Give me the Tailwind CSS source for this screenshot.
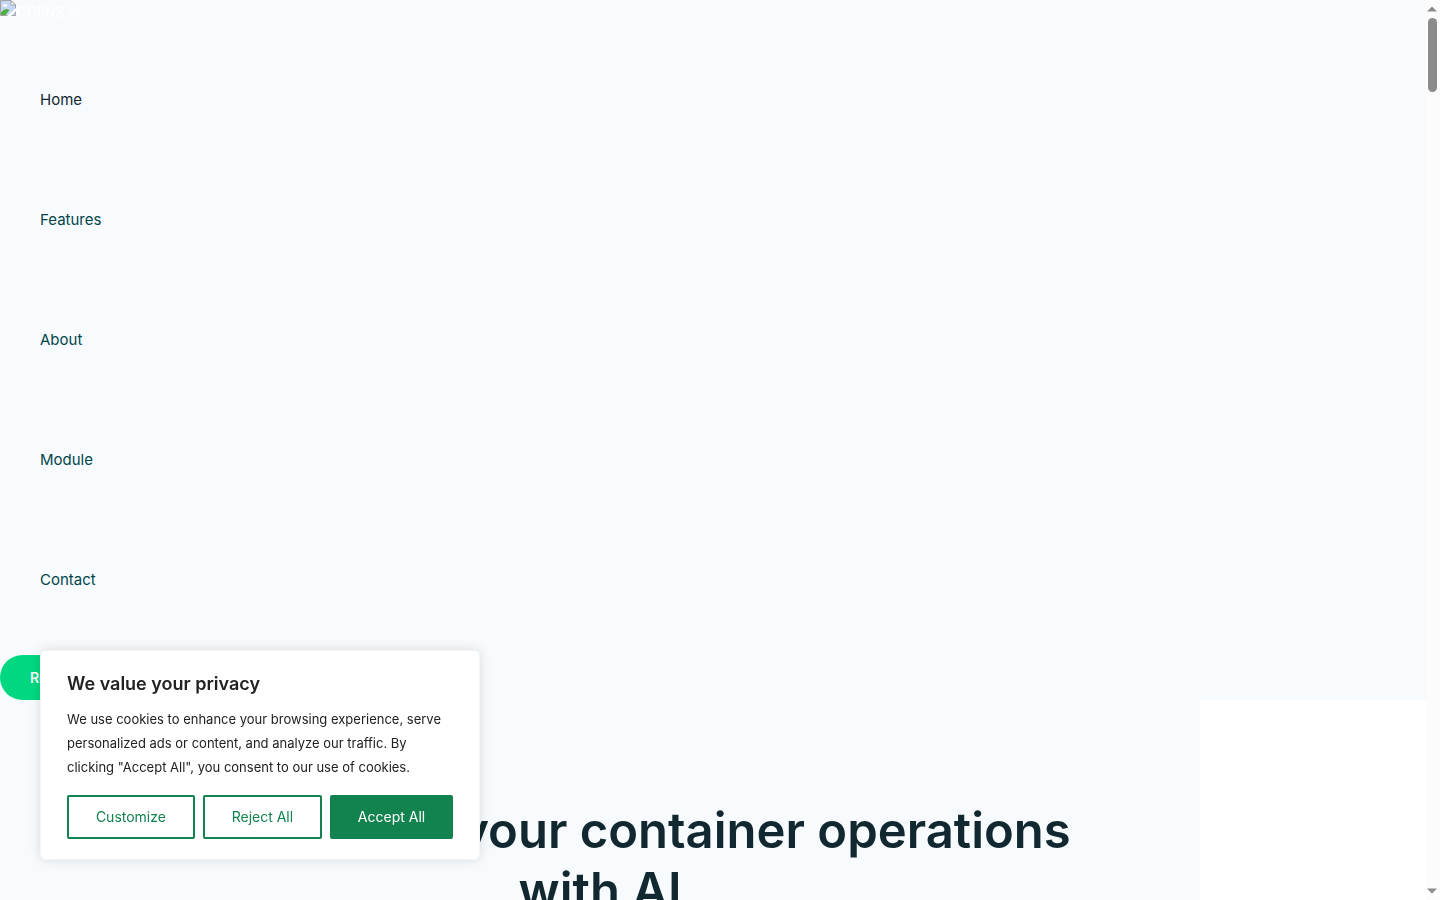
<!DOCTYPE html>
<html lang="en">
<head>
<meta charset="utf-8">
<meta name="viewport" content="width=device-width, initial-scale=1">
<title>COIINS.ai</title>
<script src="https://cdn.jsdelivr.net/npm/@tailwindcss/browser@4"></script>
</head>
<body class="flex h-screen overflow-hidden bg-white font-['Inter',sans-serif] text-[15px] text-[#004549]">
  <div class="h-screen min-w-0 flex-1 overflow-hidden">
    <header class="bg-[#f7fbfe]">
      <a href="#" class="flex h-10 items-start text-sm font-medium leading-6 text-white">
        <svg class="size-4 shrink-0" viewBox="0 0 16 16" aria-hidden="true">
          <path d="M0.5 0.5H11L15.5 5V15.5H0.5Z" fill="#c5d5f5" stroke="#a3a3a3"/>
          <path d="M11 0.5V5H15.5Z" fill="#fff" stroke="#a3a3a3"/>
          <ellipse cx="5" cy="5.5" rx="2.5" ry="1.2" fill="#fff"/>
          <path d="M1 15V12.5Q5 7 9.500 10L5.500 15Z" fill="#4fae3c"/>
          <path d="M7 16L16 8V11L11 16Z" fill="#fff"/>
        </svg>
        <span>COIINS.ai</span>
      </a>
      <nav aria-label="Main">
        <ul class="px-10 leading-[120px]">
          <li><a href="#" class="text-[#112830]">Home</a></li>
          <li><a href="#">Features</a></li>
          <li><a href="#">About</a></li>
          <li><a href="#">Module</a></li>
          <li><a href="#">Contact</a></li>
        </ul>
      </nav>
      <div class="flex pt-[15px]">
        <a href="#" class="rounded-full bg-[#00d881] px-[30px] text-sm font-semibold leading-[45px] text-white">Request Demo</a>
      </div>
    </header>
    <main class="max-w-[1200px] bg-[#f7fbfe] pt-[101px]">
      <h1 class="text-center text-[49px] font-semibold leading-[60px] text-[#112830]">Revolutionize your container operations<br>with AI</h1>
    </main>
  </div>

  <div class="flex w-[14px] shrink-0 flex-col items-center justify-between bg-[#fcfcfc] py-[6px] pr-[2px]" aria-hidden="true">
    <div class="flex flex-col items-center gap-[6px]">
      <svg class="h-[6px] w-[10px]" viewBox="0 0 10 6"><path d="M0 5.500L5 0.500L10 5.500Z" fill="#8b8b8b"/></svg>
      <div class="h-[74px] w-[9px] rounded-full bg-[#8b8b8b]"></div>
    </div>
    <svg class="h-[6px] w-[10px]" viewBox="0 0 10 6"><path d="M0 0.500L5 5.500L10 0.500Z" fill="#8b8b8b"/></svg>
  </div>

  <section role="dialog" aria-labelledby="privacy-title" class="fixed bottom-10 left-10 w-[440px] rounded-md border border-[#f4f4f4] bg-white px-[26px] pt-5 pb-5 text-[#212121] shadow-[0_0_12px_rgba(0,0,0,0.13)]">
    <h2 id="privacy-title" class="text-lg font-semibold leading-[26px]">We value your privacy</h2>
    <p class="mt-[10px] text-[13px] leading-6">We use cookies to enhance your browsing experience, serve personalized ads or content, and analyze our traffic. By clicking "Accept All", you consent to our use of cookies.</p>
    <div class="mt-4 flex gap-2 text-sm text-[#12834e]">
      <button type="button" class="h-11 flex-[128] rounded-xs border-2 border-[#12834e]">Customize</button>
      <button type="button" class="h-11 flex-[119] rounded-xs border-2 border-[#12834e]">Reject All</button>
      <button type="button" class="h-11 flex-[123] rounded-xs border-2 border-[#12834e] bg-[#12834e] text-white">Accept All</button>
    </div>
  </section>
</body>
</html>
